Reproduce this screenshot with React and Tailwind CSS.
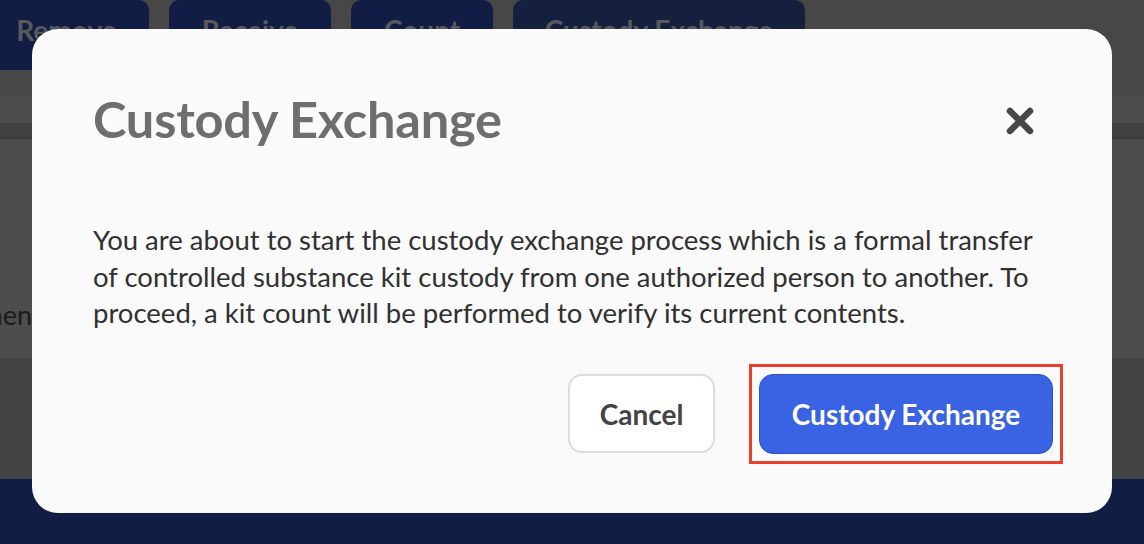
import React from "react";

const lato = { fontFamily: "Lato, 'Liberation Sans', sans-serif" };

function Tab({ label, className }) {
  return (
    <div
      className={`h-[70px] rounded-[10px] flex justify-center pt-[13px] text-[28px] font-bold leading-[34px] text-[#58595c] whitespace-nowrap shrink-0 ${className}`}
    >
      {label}
    </div>
  );
}

export default function App() {
  return (
    <div
      className="relative w-[1144px] h-[544px] overflow-hidden bg-[#4c4c4c] flex flex-col"
      style={lato}
    >
      {/* background app (darkened by overlay) */}
      <div className="h-[95px] bg-[#474747] flex gap-[20px] shrink-0">
        <Tab label="Remove" className="w-[165px] ml-[-16px] bg-[#111d45]" />
        <Tab label="Receive" className="w-[162px] bg-[#111d45]" />
        <Tab label="Count" className="w-[142px] bg-[#111d45]" />
        <Tab label="Custody Exchange" className="w-[292px] bg-[#15203f]" />
      </div>
      <div className="h-[28px] bg-[#4c4c4c] shrink-0" />
      <div className="h-[16px] bg-[#414141] border-b-2 border-[#3a3a3a] shrink-0" />
      <div className="h-[221px] bg-[#4c4c4c] border-b-2 border-[#404040] shrink-0 flex items-start pt-[160px]">
        <div className="w-[32px] overflow-hidden flex justify-end">
          <span className="text-[27px] text-[#1b1b1b] whitespace-nowrap leading-[32px]">
            Managemen
          </span>
        </div>
      </div>
      <div className="h-[119px] bg-[#444444] shrink-0" />
      <div className="flex-1 bg-[#121d44]" />

      {/* modal overlay */}
      <div className="absolute left-[32px] top-[29px] w-[1080px] h-[484px] rounded-[26px] bg-[#fafafa] flex flex-col">
        <div className="flex items-center justify-between pl-[61px] pr-[78px] pt-[60px]">
          <h1 className="text-[50.5px] font-bold leading-[60px] text-[#6e6e6e] tracking-[-0.2px]">
            Custody Exchange
          </h1>
          <svg width="28" height="28" viewBox="0 0 28 28" className="mt-[3px]">
            <path
              d="M4 4 L24 24 M24 4 L4 24"
              stroke="#474747"
              strokeWidth="6.5"
              strokeLinecap="round"
            />
          </svg>
        </div>
        <p className="pl-[61px] pr-[55px] mt-[73px] text-[27.5px] leading-[36.5px] text-[#313131]">
          You are about to start the custody exchange process which is a formal
          transfer of controlled substance kit custody from one authorized
          person to another. To proceed, a kit count will be performed to
          verify its current contents.
        </p>
        <div className="flex justify-end items-center gap-[34px] pr-[49px] mt-[32px]">
          <button className="w-[147px] h-[79px] rounded-[14px] bg-white border-2 border-[#dcdcdc] text-[28px] font-bold text-[#444444]">
            Cancel
          </button>
          <div className="border-[3px] border-[#e8402c] p-[7px]">
            <button className="w-[294px] h-[80px] rounded-[14px] bg-[#3963e3] border border-[#2e52c4] text-[28px] font-bold text-white">
              Custody Exchange
            </button>
          </div>
        </div>
      </div>
    </div>
  );
}
